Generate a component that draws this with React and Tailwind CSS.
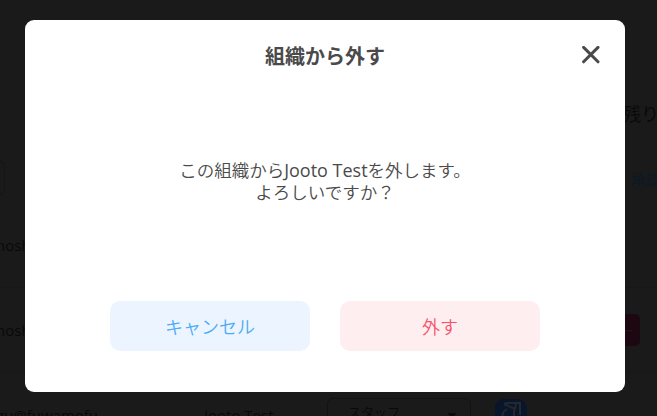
import React from "react";

function MemberTable() {
  return (
    <div className="flex h-full flex-col overflow-hidden whitespace-nowrap text-[15px] text-[#090909]">
      <div className="flex h-[132px] shrink-0 flex-col items-end pt-[101px]">
        <span className="-mr-[2px] text-[18px] leading-[26px] font-[350]">残り</span>
      </div>
      <div className="flex h-[72px] shrink-0 items-start justify-between pt-[29px]">
        <div className="h-[34px] w-[5px] rounded-r-[5px] border-y border-r border-[#151515]" />
        <span className="-mr-[4px] pt-[6px] text-[15px] leading-[24px] font-[350] text-[#0a1828]">承認</span>
      </div>
      <div className="flex h-[84px] shrink-0 items-center border-b border-[#181818]">
        <span className="-ml-[4px]">nosh</span>
      </div>
      <div className="flex h-[85px] shrink-0 items-center justify-between border-b border-[#181818] pr-[17px]">
        <span className="-ml-[4px]">nosh</span>
        <span className="flex h-[32px] w-[72px] items-center justify-end rounded-[5px] bg-[#1d0812] pr-[6px] text-[14px] text-[#2a101c]">メンバー</span>
      </div>
      <div className="flex h-[84px] shrink-0 items-center">
        <span className="w-[204px] leading-[22px]"><span className="-ml-[3px]">zu@fuwamofu</span></span>
        <span className="w-[123px] leading-[22px]">Jooto Test</span>
        <div className="flex h-[34px] w-[144px] items-start justify-between rounded-[6px] border border-[#121212] pt-[2px] pr-[13px] pl-[20px]">
          <span className="text-[13px] leading-[22px] font-[350]">スタッフ</span>
          <span className="mt-[12px] h-0 w-0 border-x-[5px] border-t-[5px] border-x-transparent border-t-[#0b0b0b]" />
        </div>
        <svg className="ml-[24px] h-8 w-8" viewBox="0 0 32 32" fill="none">
          <rect width="32" height="32" rx="9" fill="#09152a" />
          <path d="M9 5 12 4l13 0v12M9 5l11 5 1-5M19 9v10M12 10c-5 3-5 6-4 12" stroke="#23282d" strokeWidth="2" />
        </svg>
      </div>
    </div>
  );
}

function RemoveDialog() {
  return (
    <section
      role="dialog"
      className="absolute top-[20.4px] left-[25.2px] flex h-[371.6px] w-[599.6px] flex-col items-center rounded-[9px] bg-white text-[#4a4a4a]"
    >
      <header className="grid h-[70px] w-full grid-cols-[1fr_auto_1fr] items-center px-[25px]">
        <span />
        <h1 className="pt-[3px] text-[20px] leading-[30px] font-bold">組織から外す</h1>
        <button aria-label="閉じる" className="justify-self-end">
          <svg className="h-[18px] w-[18px]" viewBox="0 0 18 18" fill="none" stroke="#4a4a4a" strokeWidth="3" strokeLinecap="round">
            <path d="m1.6 1.4 14.4 14.4M16 1.4 1.6 15.8" />
          </svg>
        </button>
      </header>
      <p className="flex h-[211px] flex-col items-center justify-start pt-[69px] text-[17.5px] leading-[22px] font-[350] whitespace-nowrap">
        <span>この組織から<span className="text-[18px] font-normal">Jooto Test</span>を外します。</span>
        <span>よろしいですか？</span>
      </p>
      <div className="flex gap-[30px] text-[18px] font-[350]">
        <button className="h-[50px] w-[200px] rounded-[10px] bg-[#ecf5ff] pt-[3px] text-[#4dabf7]">キャンセル</button>
        <button className="h-[50px] w-[200px] rounded-[10px] bg-[#ffeef0] pt-[3px] text-[#f5536c]">外す</button>
      </div>
    </section>
  );
}

export default function App() {
  return (
    <main className="relative h-[416px] w-[657px] overflow-hidden bg-[#1a1a1a] font-['Open_Sans','Noto_Sans_CJK_JP',sans-serif]">
      <MemberTable />
      <RemoveDialog />
    </main>
  );
}
